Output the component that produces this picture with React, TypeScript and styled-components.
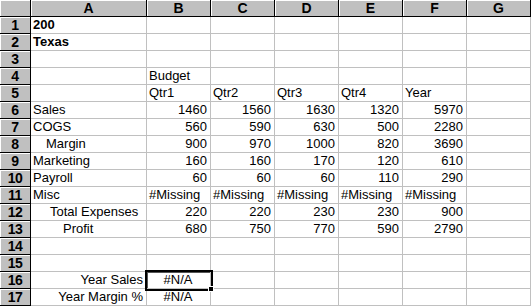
import React from 'react';
import styled, { createGlobalStyle, css } from 'styled-components';

type Align = 'left' | 'right' | 'center';

interface CellData {
  text: string;
  align?: Align;
  bold?: boolean;
  indent?: number;
  selected?: boolean;
}

const GlobalStyle = createGlobalStyle`
  html, body {
    margin: 0;
    padding: 0;
    background: #fff;
  }
  body {
    font-family: "Liberation Sans", Arial, sans-serif;
  }
`;

const COLUMNS = ['A', 'B', 'C', 'D', 'E', 'F', 'G'];

const Sheet = styled.div`
  display: grid;
  grid-template-columns: 31px 116px repeat(6, 64px);
  grid-auto-rows: 17px;
  width: 531px;
  background: #fff;
`;

const headerBase = css`
  box-sizing: border-box;
  background: #c0c0c0;
  border-right: 1px solid #000;
  border-bottom: 1px solid #000;
  box-shadow: inset 1px 1px 0 #fff;
  display: flex;
  align-items: center;
  justify-content: center;
  font-weight: bold;
  color: #000;
`;

const CornerCell = styled.div`
  ${headerBase};
`;

const ColHeader = styled.div`
  ${headerBase};
  font-size: 14px;
`;

const RowHeader = styled.div`
  ${headerBase};
  font-size: 14px;
  letter-spacing: -0.5px;
`;

const Cell = styled.div<{ $align: Align; $bold: boolean; $indent: number; $selected: boolean }>`
  position: relative;
  box-sizing: border-box;
  border-right: 1px solid #c0c0c0;
  border-bottom: 1px solid #c0c0c0;
  padding: 0 3px 0 ${(p) => 2 + p.$indent}px;
  font-size: 13px;
  line-height: 16px;
  white-space: nowrap;
  color: #000;
  text-align: ${(p) => p.$align};
  font-weight: ${(p) => (p.$bold ? 'bold' : 'normal')};
  ${(p) => p.$selected && css`
    outline: 2px solid #000;
    outline-offset: 0;
    box-shadow: inset 1px 1px 0 #555;
    z-index: 1;
    &::after {
      content: '';
      position: absolute;
      right: -4px;
      bottom: -4px;
      width: 6px;
      height: 6px;
      background: #000;
      border: 1px solid #fff;
      box-sizing: border-box;
    }
  `}
`;

const num = (text: string): CellData => ({ text, align: 'right' });
const txt = (text: string): CellData => ({ text });

const ROWS: CellData[][] = [
  [{ text: '200', bold: true }],
  [{ text: 'Texas', bold: true }],
  [],
  [txt(''), txt('Budget')],
  [txt(''), txt('Qtr1'), txt('Qtr2'), txt('Qtr3'), txt('Qtr4'), txt('Year')],
  [txt('Sales'), num('1460'), num('1560'), num('1630'), num('1320'), num('5970')],
  [txt('COGS'), num('560'), num('590'), num('630'), num('500'), num('2280')],
  [{ text: 'Margin', indent: 13 }, num('900'), num('970'), num('1000'), num('820'), num('3690')],
  [txt('Marketing'), num('160'), num('160'), num('170'), num('120'), num('610')],
  [txt('Payroll'), num('60'), num('60'), num('60'), num('110'), num('290')],
  [txt('Misc'), txt('#Missing'), txt('#Missing'), txt('#Missing'), txt('#Missing'), txt('#Missing')],
  [{ text: 'Total Expenses', indent: 17 }, num('220'), num('220'), num('230'), num('230'), num('900')],
  [{ text: 'Profit', indent: 30 }, num('680'), num('750'), num('770'), num('590'), num('2790')],
  [],
  [],
  [{ text: 'Year Sales', align: 'right' }, { text: '#N/A', align: 'center', selected: true }],
  [{ text: 'Year Margin %', align: 'right' }, { text: '#N/A', align: 'center' }],
];

const App: React.FC = () => (
  <>
    <GlobalStyle />
    <Sheet>
      <CornerCell />
      {COLUMNS.map((c) => (
        <ColHeader key={c}>{c}</ColHeader>
      ))}
      {ROWS.map((row, r) => (
        <React.Fragment key={r}>
          <RowHeader>{r + 1}</RowHeader>
          {COLUMNS.map((c, i) => {
            const cell = row[i] || { text: '' };
            return (
              <Cell
                key={c}
                $align={cell.align || 'left'}
                $bold={!!cell.bold}
                $indent={cell.indent || 0}
                $selected={!!cell.selected}
              >
                {cell.text}
              </Cell>
            );
          })}
        </React.Fragment>
      ))}
    </Sheet>
  </>
);

export default App;
